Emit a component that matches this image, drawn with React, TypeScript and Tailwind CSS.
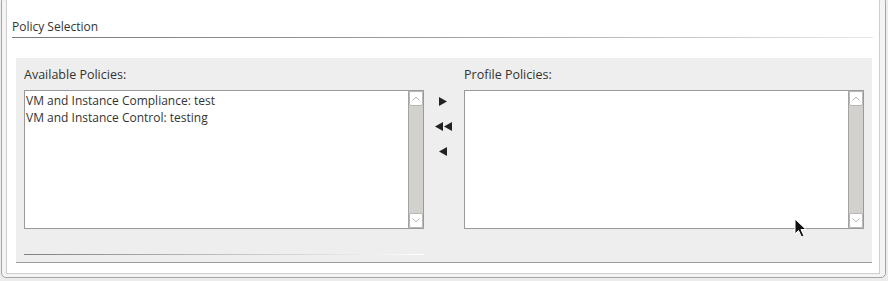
import React from "react";

const font = { fontFamily: '"Open Sans", "Noto Sans", sans-serif' };

function ScrollBar() {
  return (
    <div className="w-[15px] h-full flex flex-col bg-[#d3d1ce] border-l border-[#a3a3a3]">
      <div className="h-[15px] bg-white border border-[#b8b8b8] rounded-[2px] flex items-center justify-center">
        <svg width="8" height="5" viewBox="0 0 8 5">
          <path d="M0.5 4.5 L4 1 L7.5 4.5" fill="none" stroke="#b5b5b5" strokeWidth="1" />
        </svg>
      </div>
      <div className="flex-1" />
      <div className="h-[15px] bg-white border border-[#b8b8b8] rounded-[2px] flex items-center justify-center">
        <svg width="8" height="5" viewBox="0 0 8 5">
          <path d="M0.5 0.5 L4 4 L7.5 0.5" fill="none" stroke="#b5b5b5" strokeWidth="1" />
        </svg>
      </div>
    </div>
  );
}

function ListBox({ items }: { items: string[] }) {
  return (
    <div className="w-[400px] h-[139px] border border-[#9a9a9a] bg-white flex">
      <div className="flex-1 pl-px pt-[1px] text-[12px] leading-[17px] text-[#333]">
        {items.map((it) => (
          <div key={it}>{it}</div>
        ))}
      </div>
      <ScrollBar />
    </div>
  );
}

export default function App() {
  return (
    <div className="w-[888px] h-[281px] bg-[#ececec] overflow-hidden relative" style={font}>
      <div className="ml-px -mt-[3px] w-[885px] h-[281px] border border-[#a6a6a6] rounded-[5px] bg-[#f4f4f4] pl-[4px] pr-[5px] pb-[3px]">
        <div className="h-full border border-t-0 border-[#cdcdcd] bg-white pl-[5px] pr-[6px] pt-[21px]">
          <div className="text-[12px] leading-[16px] text-[#333] pb-[2px]">Policy Selection</div>
          <div className="h-px bg-gradient-to-r from-[#7a7a7a] via-[#a0a0a0] to-[#e8e8e8]" />
          <div className="mt-[20px] ml-[4px] mr-[1px] h-[205px] bg-[#eeeeee] border-b border-[#9c9c9c] pl-[8px] pt-[9px] flex">
            <div className="flex flex-col">
              <div className="text-[12.5px] leading-[16px] text-[#333] h-[23px]">Available Policies:</div>
              <ListBox items={["VM and Instance Compliance: test", "VM and Instance Control: testing"]} />
              <div className="mt-[25px] h-px w-[400px] bg-gradient-to-r from-[#808080] via-[#c0c0c0] to-white" />
            </div>
            <div className="w-[40px] flex flex-col items-center pt-[30px] gap-[16px]">
              <svg width="8" height="9" viewBox="0 0 8 9" className="ml-[-2px]">
                <path d="M0 0 L8 4.5 L0 9 Z" fill="#222" />
              </svg>
              <svg width="17" height="9" viewBox="0 0 17 9" className="ml-[-2px]">
                <path d="M0 4.5 L8 0 L8 9 Z M9 4.5 L17 0 L17 9 Z" fill="#222" />
              </svg>
              <svg width="8" height="9" viewBox="0 0 8 9" className="ml-[-2px]">
                <path d="M8 0 L0 4.5 L8 9 Z" fill="#222" />
              </svg>
            </div>
            <div className="flex flex-col">
              <div className="text-[12.5px] leading-[16px] text-[#333] h-[23px]">Profile Policies:</div>
              <ListBox items={[]} />
            </div>
          </div>
        </div>
      </div>
      <svg className="absolute left-[794px] top-[218px]" width="14" height="21" viewBox="0 0 14 21">
        <path d="M1 1 L1 16 L4.5 12.5 L7.5 19 L10 18 L7 11.5 L12 11.5 Z" fill="#111" stroke="#fff" strokeWidth="1" strokeLinejoin="round" />
      </svg>
    </div>
  );
}
